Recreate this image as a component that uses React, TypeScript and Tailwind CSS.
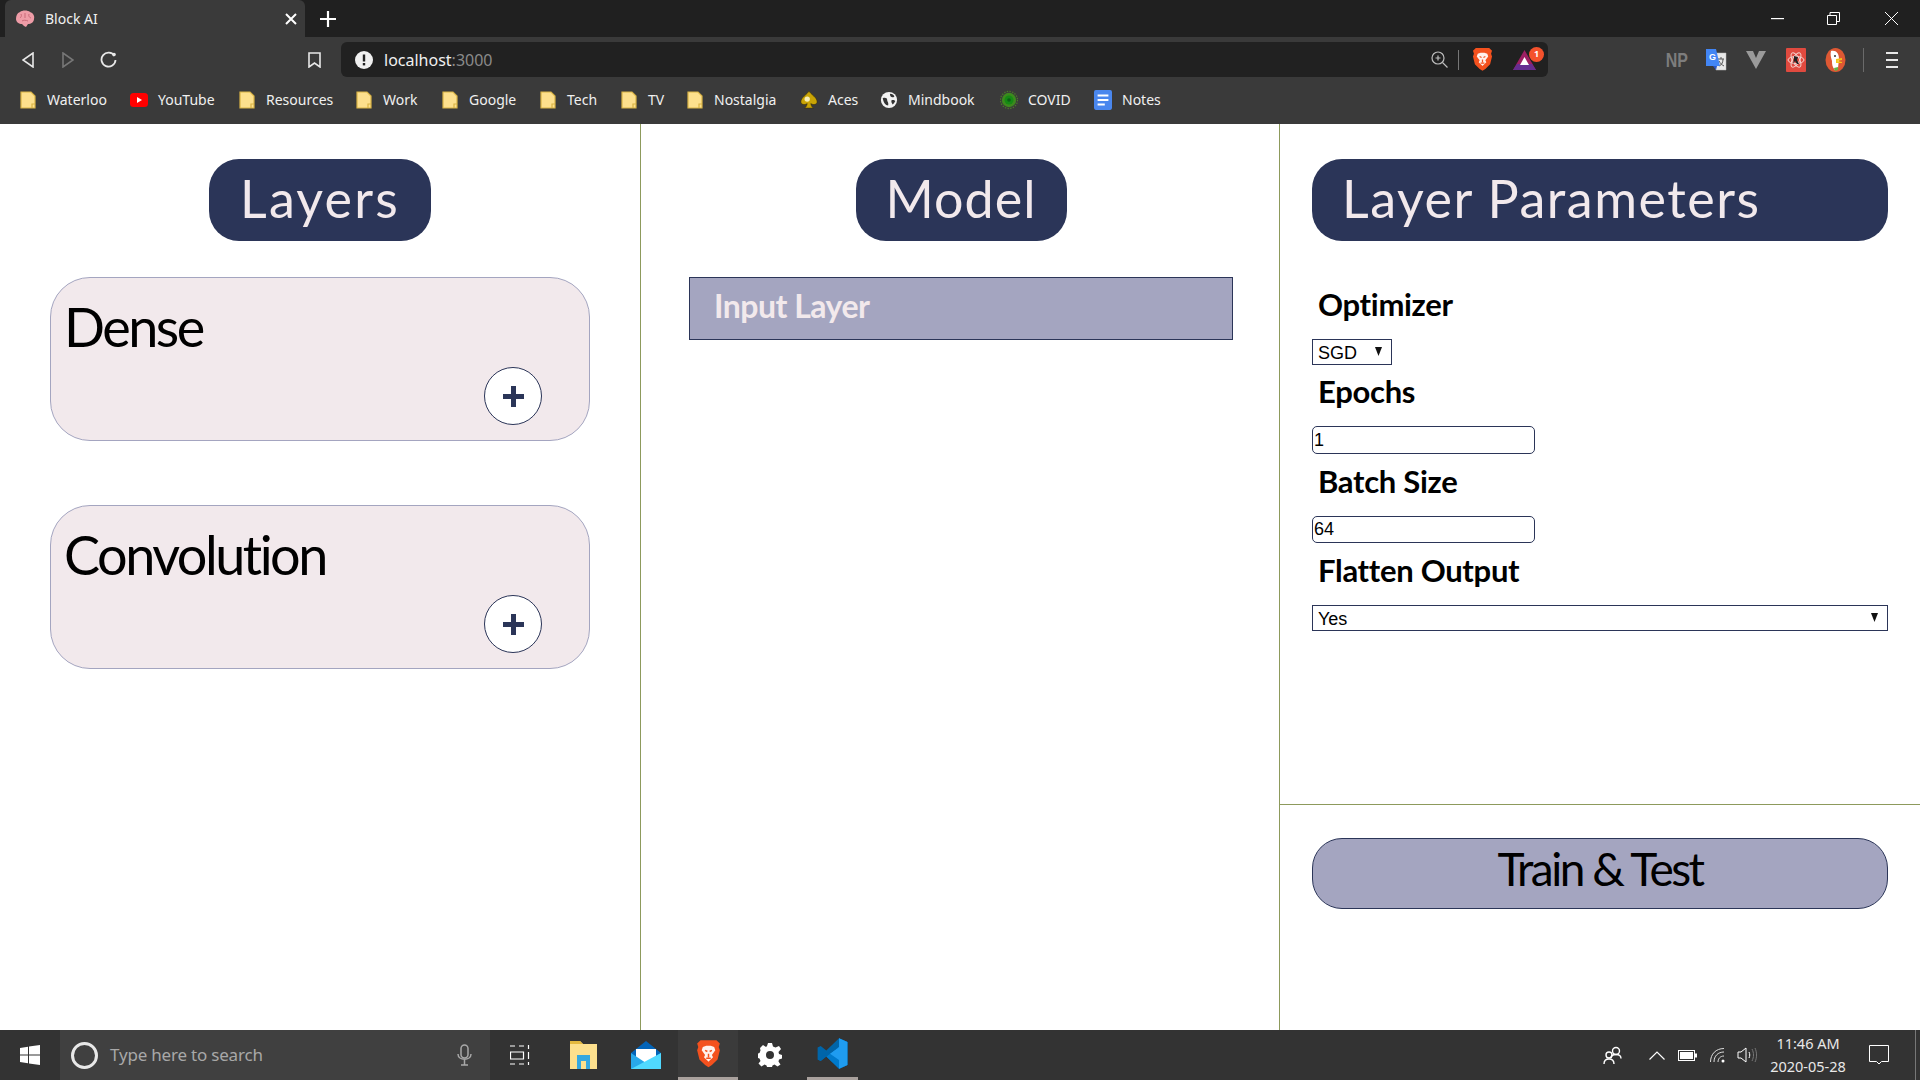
import { Fragment } from 'react';

const Folder = () => (
  <svg width="16" height="18" viewBox="0 0 16 18">
    <path d="M1 1h10l4 4v12H1z" fill="#fde08d" stroke="#d9b345" strokeWidth="1.2" />
    <path d="M12 17v-4h3" fill="none" stroke="#d9b345" strokeWidth="1.2" />
  </svg>
);

const YouTubeIcon = () => (
  <svg width="18" height="14" viewBox="0 0 18 14">
    <rect width="18" height="14" rx="3.5" fill="#f00" />
    <path d="M7 4l5 3-5 3z" fill="#fff" />
  </svg>
);

const AcesIcon = () => (
  <svg width="20" height="22" viewBox="0 0 20 22">
    <path d="M10 1C8 5 1 8 1 13c0 3 4 4 7 2-.3 2-1 4-3 5h10c-2-1-2.700-3-3-5 3 2 7 1 7-2 0-5-7-8-9-12z" fill="#c9a406" stroke="#3b3000" strokeWidth=".6" />
    <circle cx="8" cy="10" r="3" fill="#f6eeb8" />
  </svg>
);

const MindbookIcon = () => (
  <svg width="20" height="20" viewBox="0 0 20 20">
    <circle cx="10" cy="10" r="9" fill="#f2f2f2" />
    <path d="M3 8c3-1 5 0 5 2s2 3 1 6c-3 0-5-3-6-8zM11 3c3 0 4 1 5 3-2 2-5 1-5-3zM13 10c2 0 3 0 4 1-1 2-2 3-3 4-1-2-2-3-1-5z" fill="#333" />
  </svg>
);

const CovidIcon = () => (
  <svg width="20" height="20" viewBox="0 0 20 20">
    <circle cx="10" cy="10" r="9.5" fill="none" stroke="#4c7a2a" strokeWidth="1.400" strokeDasharray="1.500 1.500" />
    <circle cx="10" cy="10" r="8" fill="#3c8a1e" />
    <circle cx="10" cy="10" r="5" fill="#158a14" />
    <circle cx="10" cy="10" r="2" fill="#0c5e14" />
  </svg>
);

const NotesIcon = () => (
  <svg width="20" height="22" viewBox="0 0 20 22">
    <rect width="20" height="22" rx="2" fill="#4a87ee" />
    <path d="M4 6h12M4 11h12M4 16h8" stroke="#fff" strokeWidth="2" />
  </svg>
);

const bookmarks = [
  { name: 'Waterloo', width: 'w-[111px]', icon: <Folder /> },
  { name: 'YouTube', width: 'w-[108px]', icon: <YouTubeIcon /> },
  { name: 'Resources', width: 'w-[117px]', icon: <Folder /> },
  { name: 'Work', width: 'w-[86px]', icon: <Folder /> },
  { name: 'Google', width: 'w-[98px]', icon: <Folder /> },
  { name: 'Tech', width: 'w-[81px]', icon: <Folder /> },
  { name: 'TV', width: 'w-[66px]', icon: <Folder /> },
  { name: 'Nostalgia', width: 'w-[114px]', icon: <Folder /> },
  { name: 'Aces', width: 'w-[80px]', icon: <AcesIcon /> },
  { name: 'Mindbook', width: 'w-[120px]', icon: <MindbookIcon /> },
  { name: 'COVID', width: 'w-[94px]', icon: <CovidIcon /> },
  { name: 'Notes', width: 'w-[80px]', icon: <NotesIcon /> },
];

const BraveIcon = ({ size = 22 }: { size?: number }) => (
  <svg width={size} height={size * 1.18} viewBox="0 0 22 26">
    <path d="M4 1h14l3 3-1 3 1 3-2 8-5 5-3 2-3-2-5-5-2-8 1-3-1-3z" fill="#f4511e" />
    <path d="M6 7l3-1h4l3 1 1 3-3 4 1 2-3 3-1 1-1-1-3-3 1-2-3-4z" fill="#fff" opacity=".92" />
    <path d="M8 10l2 1M14 10l-2 1M11 13v3M9 17h4" stroke="#f4511e" strokeWidth="1.300" fill="none" />
  </svg>
);

const BatIcon = () => (
  <div className="relative w-[22px] h-[20px]">
    <svg width="23" height="20" viewBox="0 0 23 20">
      <path d="M11.500 0L23 20H0z" fill="#9e1f63" />
      <path d="M0 20l4-6h15l4 6z" fill="#662d91" />
      <path d="M11.500 7L16 15H7z" fill="#fff" />
    </svg>
    <div className="absolute -top-[3px] left-[16px] w-[15px] h-[15px] rounded-full bg-[#f4512c] text-white text-[9px] font-bold flex items-center justify-center">1</div>
  </div>
);

const TranslateIcon = () => (
  <svg width="21" height="22" viewBox="0 0 21 22">
    <path d="M8 4h12v17H10z" fill="#e8e8e8" stroke="#bbb" strokeWidth=".5" />
    <path d="M12 10h6M15 8v2M13 17c3-1 4-4 4-7M13 12c1 2 3 4 5 5" stroke="#555" strokeWidth="1" fill="none" />
    <path d="M0 0h10l4 17H0z" fill="#4285f4" />
    <path d="M11 17l-1 4-3-4z" fill="#2a56c6" />
    <text x="3" y="11" fontSize="9" fontWeight="700" fill="#fff" fontFamily="Liberation Sans, sans-serif">G</text>
  </svg>
);

const ReactExtIcon = () => (
  <svg width="20" height="24" viewBox="0 0 20 24">
    <rect width="20" height="24" rx="1" fill="#e04a3f" />
    <g fill="none" stroke="#f5d5d0" strokeWidth="1">
      <ellipse cx="10" cy="12" rx="8" ry="3.500" />
      <ellipse cx="10" cy="12" rx="8" ry="3.500" transform="rotate(60 10 12)" />
      <ellipse cx="10" cy="12" rx="8" ry="3.500" transform="rotate(120 10 12)" />
    </g>
    <path d="M8 8l4 1-1 3 2 4h-2l-2-3-2 3 1-5z" fill="#222" />
  </svg>
);

const DuckIcon = () => (
  <svg width="21" height="24" viewBox="0 0 21 24">
    <ellipse cx="10.500" cy="12" rx="10" ry="12" fill="#de5833" />
    <path d="M6 3c5-1 8 2 8 8l-1 9-3 2c-3-3-3-6-3-9-1-3-2-7-1-10z" fill="#fff" />
    <circle cx="10" cy="8" r="1" fill="#333" />
    <path d="M11 11l6-1v2l-5 1 5 1v1l-6 0z" fill="#f5c518" />
    <path d="M9 20l4-1v3l-3 1z" fill="#67b346" />
  </svg>
);

const WindowsLogo = () => (
  <svg width="20" height="20" viewBox="0 0 20 20" fill="#fff">
    <path d="M0 3l8-1.200V9.500H0zM9 1.600L20 0v9.500H9zM0 10.500h8v7.700L0 17zM9 10.500h11V20L9 18.400z" />
  </svg>
);

const MailIcon = () => (
  <svg width="30" height="28" viewBox="0 0 30 28">
    <path d="M15 0L0 12v16h30V12z" fill="#0364b8" />
    <path d="M5 8h20v10L15 22 5 18z" fill="#fff" />
    <path d="M0 12l15 10 15-10v16H0z" fill="#28a8ea" />
    <path d="M0 28l30-16v16z" fill="#50d9ff" />
  </svg>
);

const VsCodeIcon = () => (
  <svg width="31" height="31" viewBox="0 0 100 100">
    <path d="M71 99L30 60 12 74 2 69V31l10-5 18 14L71 1l27 12v74z" fill="#0065a9" />
    <path d="M71 99L30 60l41-31v71l27-13V13L71 1z" fill="#007acc" />
    <path d="M71 1l27 12v74L71 99V71L41 50l30-21z" fill="#1f9cf0" />
    <path d="M71 29L30 60 12 74 2 69l28-19z" fill="#0065a9" />
  </svg>
);

const Pill = ({ children, className }: { children: string; className: string }) => (
  <div className={`h-[82px] bg-[#2b3558] rounded-[30px] text-[#f2e9ec] text-[52px] leading-[78px] ${className}`}>
    {children}
  </div>
);

const LayerCard = ({ name }: { name: string }) => (
  <div className="h-[164px] mx-[50px] bg-[#f2e9ec] border border-[#a4a5c0] rounded-[40px] pl-[13px] pt-[14px]">
    <div className="text-[54px] leading-[70px] tracking-[-2.500px] text-black">{name}</div>
    <div className="flex justify-end pr-[47px] mt-[5px]">
      <div className="w-[58px] h-[58px] rounded-full bg-white border border-[#2b3558] flex items-center justify-center">
        <svg width="21" height="21" viewBox="0 0 21 21" fill="#2b3558">
          <path d="M8 0h5v8h8v5h-8v8H8v-8H0V8h8z" />
        </svg>
      </div>
    </div>
  </div>
);

const ParamLabel = ({ children }: { children: string }) => (
  <div className="h-[42px] pl-[6px] text-[31px] leading-[50px] font-bold text-black tracking-[-0.300px]">{children}</div>
);

const ParamSelect = ({ value, className }: { value: string; className: string }) => (
  <div className={`relative mt-[18px] h-[26px] ${className}`}>
    <select defaultValue={value} className="appearance-none w-full h-full border border-[#2b3558] bg-white text-[18px] font-['Liberation_Sans',sans-serif] pl-[5px]">
      <option>{value}</option>
    </select>
    <svg className="absolute right-[10px] top-[8px] pointer-events-none" width="7" height="9" viewBox="0 0 7 9" fill="#111"><path d="M0 0h7L3.500 9z" /></svg>
  </div>
);

export default function App() {
  return (
    <div className="w-[1920px] h-[1080px] flex flex-col overflow-hidden bg-white font-['Lato',sans-serif]">
      {/* Tab strip */}
      <div className="h-[37px] bg-[#202020] flex shrink-0 font-['Noto_Sans',sans-serif]">
        <div className="ml-[5px] w-[300px] h-[37px] bg-[#3a3a3a] rounded-t-[6px] flex items-center pl-[10px] pr-[8px] text-[14px] text-[#f0f0f0]">
          <svg width="20" height="18" viewBox="0 0 20 18">
            <path d="M5 2c2-2 8-2 10 0 3 1 5 4 4 7 0 3-3 5-6 5l-2 3-2-1-2-2c-3 0-6-2-6-5 0-3 1-6 4-7z" fill="#ee9ca7" />
            <path d="M6 4c1 2 0 3-1 4M10 3v5M14 4c-1 2 1 4 2 4M7 11c1-1 4-1 6 0" stroke="#c96a78" fill="none" />
          </svg>
          <span className="ml-[10px] flex-1">Block AI</span>
          <svg width="12" height="12" viewBox="0 0 12 12" stroke="#fff" strokeWidth="2"><path d="M1 1l10 10M11 1L1 11" /></svg>
        </div>
        <div className="ml-[15px] flex items-center">
          <svg width="16" height="16" viewBox="0 0 16 16" stroke="#fff" strokeWidth="2.200"><path d="M8 0v16M0 8h16" /></svg>
        </div>
        <div className="flex-1 flex items-center justify-end">
          <svg className="mr-[43px]" width="13" height="2" viewBox="0 0 13 2" fill="#fff"><rect width="13" height="1.200" /></svg>
          <svg className="mr-[45px]" width="13" height="13" viewBox="0 0 13 13" fill="none" stroke="#fff"><path d="M.5 3.500h9v9h-9zM3 3.500V.5h9.500v9H9.500" /></svg>
          <svg className="mr-[22px]" width="13" height="13" viewBox="0 0 13 13" stroke="#fff"><path d="M0 0l13 13M13 0L0 13" /></svg>
        </div>
      </div>

      {/* Toolbar */}
      <div className="h-[40px] bg-[#3a3a3a] flex shrink-0 pt-[5px] font-['Noto_Sans',sans-serif]">
        <div className="w-[341px] flex items-center h-[35px]">
          <svg className="ml-[22px]" width="12" height="16" viewBox="0 0 12 16" fill="none" stroke="#e8e8e8" strokeWidth="1.600"><path d="M11 1v14L1 8z" /></svg>
          <svg className="ml-[28px]" width="12" height="16" viewBox="0 0 12 16" fill="none" stroke="#777" strokeWidth="1.600"><path d="M1 1v14l10-7z" /></svg>
          <svg className="ml-[26px]" width="17" height="17" viewBox="0 0 17 17" fill="none" stroke="#e8e8e8" strokeWidth="1.800">
            <path d="M14.500 5A7 7 0 1 0 15.500 9" />
            <circle cx="14" cy="3.500" r="1.800" fill="#e8e8e8" stroke="none" />
          </svg>
          <svg className="ml-[191px]" width="13" height="16" viewBox="0 0 13 16" fill="none" stroke="#e8e8e8" strokeWidth="1.600"><path d="M1 1h11v14l-5.500-4L1 15z" /></svg>
        </div>
        <div className="w-[1207px] h-[35px] bg-[#212121] rounded-[6px] flex items-center pl-[14px] pr-[2px]">
          <svg width="18" height="18" viewBox="0 0 18 18">
            <circle cx="9" cy="9" r="9" fill="#f0f0f0" />
            <rect x="7.800" y="3.500" width="2.400" height="7" fill="#222" />
            <rect x="7.800" y="12" width="2.400" height="2.400" fill="#222" />
          </svg>
          <span className="ml-[11px] text-[16px] text-[#f0f0f0] flex-1">localhost<span className="text-[#8a8a8a]">:3000</span></span>
          <svg className="mr-[-2px]" width="17" height="17" viewBox="0 0 17 17" fill="none" stroke="#bdbdbd" strokeWidth="1.200">
            <circle cx="7" cy="7" r="6" />
            <path d="M11.500 11.500L16.500 16.500M4.500 7h5M7 4.500v5" />
          </svg>
          <div className="ml-[12px] w-px h-[20px] bg-[#777]" />
          <div className="ml-[13px] mr-[20px]"><BraveIcon size={21} /></div>
          <div className="mr-[11px]"><BatIcon /></div>
        </div>
        <div className="flex items-center h-[35px]">
          <span className="ml-[115px] text-[20px] leading-none font-bold text-[#7d7d7d] scale-x-[.8] font-['Liberation_Sans',sans-serif]">NP</span>
          <div className="ml-[15px]"><TranslateIcon /></div>
          <svg className="ml-[19px]" width="20" height="18" viewBox="0 0 20 18"><path d="M0 0h7l3 7 3-7h7l-10 18z" fill="#9a9a9a" /></svg>
          <div className="ml-[20px]"><ReactExtIcon /></div>
          <div className="ml-[19px]"><DuckIcon /></div>
          <div className="ml-[17px] w-px h-[24px] bg-[#6a6a6a]" />
          <svg className="ml-[22px]" width="12" height="16" viewBox="0 0 12 16" fill="#e8e8e8"><rect width="12" height="2" /><rect y="7" width="12" height="2" /><rect y="14" width="12" height="2" /></svg>
        </div>
      </div>

      {/* Bookmarks */}
      <div className="h-[47px] bg-[#3a3a3a] flex items-center pl-[19px] shrink-0 pb-[2px] font-['Noto_Sans',sans-serif]">
        {bookmarks.map((b) => (
          <div key={b.name} className={`${b.width} flex items-center text-[14px] text-[#f0f0f0]`}>
            <div className="w-[18px] flex justify-center">{b.icon}</div>
            <span className="ml-[10px]">{b.name}</span>
          </div>
        ))}
      </div>

      {/* App */}
      <div className="flex-1 grid grid-cols-[641px_639px_640px] min-h-0">
        <div className="border-r border-[#8d9a5c] pt-[35px]">
          <div className="flex justify-center"><Pill className="w-[222px] text-center tracking-[2.200px]">Layers</Pill></div>
          <div className="mt-[36px]"><LayerCard name="Dense" /></div>
          <div className="mt-[64px]"><LayerCard name="Convolution" /></div>
        </div>

        <div className="border-r border-[#8d9a5c] pt-[35px]">
          <div className="flex justify-center pl-[2px]"><Pill className="w-[211px] text-center tracking-[1px]">Model</Pill></div>
          <div className="mt-[36px] ml-[48px] mr-[46px] h-[63px] bg-[#a4a5c0] border border-[#2b3558] pl-[24px] text-[32px] leading-[56px] font-bold text-[#f2e9ec] tracking-[-0.500px]">
            Input Layer
          </div>
        </div>

        <div className="flex flex-col">
          <div className="h-[681px] border-b border-[#8d9a5c] pt-[35px] px-[32px]">
            <Pill className="pl-[30px] tracking-[1.500px]">Layer Parameters</Pill>
            <div className="mt-[38px] flex flex-col items-start">
              {['Optimizer', 'Epochs', 'Batch Size', 'Flatten Output'].map((label) => (
                <Fragment key={label}>
                  <div className="w-full"><ParamLabel>{label}</ParamLabel></div>
                  {label === 'Optimizer' && <ParamSelect value="SGD" className="w-[80px] mb-px" />}
                  {label === 'Epochs' && (
                    <input readOnly value="1" className="mt-[18px] mb-[2px] w-[223px] h-[28px] border border-[#2b3558] rounded-[5px] bg-white text-[18px] font-['Liberation_Sans',sans-serif] pl-[1px]" />
                  )}
                  {label === 'Batch Size' && (
                    <input readOnly value="64" className="mt-[18px] mb-[2px] w-[223px] h-[27px] border border-[#2b3558] rounded-[5px] bg-white text-[18px] font-['Liberation_Sans',sans-serif] pl-[1px]" />
                  )}
                  {label === 'Flatten Output' && <ParamSelect value="Yes" className="w-full" />}
                </Fragment>
              ))}
            </div>
          </div>
          <div className="flex-1 px-[32px] pt-[33px]">
            <div className="h-[71px] bg-[#a4a5c0] border border-[#2b3558] rounded-[30px] text-center text-[46px] leading-[60px] tracking-[-2.500px] text-black">
              Train &amp; Test
            </div>
          </div>
        </div>
      </div>

      {/* Taskbar */}
      <div className="h-[50px] bg-[#333333] flex items-center shrink-0 font-['Noto_Sans',sans-serif]">
        <div className="w-[60px] flex justify-center"><WindowsLogo /></div>
        <div className="w-[430px] h-[50px] bg-[#404040] flex items-center pl-[11px]">
          <div className="w-[27px] h-[27px] rounded-full border-[3px] border-[#e8e8e8]" />
          <span className="ml-[12px] flex-1 text-[17px] text-[#a8a8a8] tracking-[-0.200px]">Type here to search</span>
          <svg className="mr-[18px]" width="15" height="22" viewBox="0 0 15 22" fill="none" stroke="#a8a8a8" strokeWidth="1.500">
            <rect x="4" y="1" width="7" height="13" rx="3.500" />
            <path d="M1 10c0 7 13 7 13 0M7.500 16v5M4 21h7" />
          </svg>
        </div>
        <svg className="ml-[20px]" width="20" height="20" viewBox="0 0 20 20" fill="none" stroke="#fff" strokeWidth="1.200">
          <path d="M0 1h5M9 1h5M0 19h5M9 19h5M.5 7h13v7H.5zM18.500 0v4M18.500 7v7M18.500 17v3" />
        </svg>
        <svg className="ml-[40px]" width="27" height="28" viewBox="0 0 27 28">
          <path d="M0 0h10l3 3h14v25H0z" fill="#fde08d" />
          <path d="M0 0h10l3 3H0z" fill="#e4b93f" />
          <path d="M7 14h13v14h-4v-8h-5v8H7z" fill="#35a8e0" />
        </svg>
        <div className="ml-[34px]"><MailIcon /></div>
        <div className="ml-[17px] w-[60px] h-[50px] bg-[#3b3b3b] border-b-[3px] border-[#a9a19d] flex items-center justify-center"><BraveIcon size={25} /></div>
        <svg className="ml-[20px]" width="24" height="24" viewBox="0 0 24 24" fill="#fff">
          <path fillRule="evenodd" d="M10 0h4l1 3.500 2.500 1L21 3l2 3-2.500 3 .5 2 3 1v3.500l-3 1-.5 2 2 3-3 2-3-2-2 1-1 3h-4l-1-3-2-1-3 2-3-3 2-2.500-1-2.500-3-1V11l3-1 1-2.500L2 5l3-3 3 2 1-1zM12 8a4 4 0 1 0 0 8 4 4 0 0 0 0-8z" />
        </svg>
        <div className="ml-[25px] w-[51px] h-[50px] border-b-[3px] border-[#a9a19d] flex items-center justify-center"><VsCodeIcon /></div>
        <div className="flex-1 flex items-center justify-end h-[50px]">
          <svg width="19" height="19" viewBox="0 0 19 19" fill="none" stroke="#fff" strokeWidth="1.400">
            <circle cx="13" cy="5" r="3.500" /><path d="M8 12c0-2 2-3.500 5-3.500s5 1 5 4" />
            <circle cx="6" cy="9" r="3" /><path d="M1 18c0-3 2-5 5-5s5 2 5 5" />
          </svg>
          <svg className="ml-[27px]" width="16" height="9" viewBox="0 0 16 9" fill="none" stroke="#fff" strokeWidth="1.200"><path d="M.5 8.500L8 1l7.500 7.500" /></svg>
          <svg className="ml-[13px]" width="19" height="11" viewBox="0 0 19 11">
            <rect x=".5" y=".5" width="16" height="10" fill="none" stroke="#fff" />
            <rect x="2" y="2" width="13" height="7" fill="#fff" />
            <rect x="17" y="3.500" width="2" height="4" fill="#fff" />
          </svg>
          <svg className="ml-[13px]" width="15" height="15" viewBox="0 0 15 15" fill="none" stroke="#ddd">
            <path d="M.5 14C.5 6 6 .5 14 .5M4 14c0-6 4-10 10-10M8 14c0-3 2-6 6-6" />
            <circle cx="13" cy="13" r="1.500" fill="#fff" stroke="none" />
          </svg>
          <svg className="ml-[12px]" width="20" height="16" viewBox="0 0 20 16" fill="none" stroke="#fff">
            <path d="M1 5h3l5-4v14l-5-4H1zM12 5c1 2 1 4 0 6" />
            <path d="M15 2c2 4 2 8 0 12M18 1c2 4 2 10 0 14" stroke="#777" />
          </svg>
          <div className="ml-[1px] w-[100px] text-center text-[14.500px] leading-[23px] text-[#e8e8e8]">
            <div>11:46 AM</div>
            <div>2020-05-28</div>
          </div>
          <svg className="ml-[11px]" width="20" height="20" viewBox="0 0 20 20" fill="none" stroke="#fff">
            <path d="M.5.5h19v16h-7l-2.500 2.500-2.500-2.500h-7z" />
          </svg>
          <div className="ml-[26px] mr-[4px] w-px h-[50px] bg-[#777]" />
        </div>
      </div>
    </div>
  );
}
